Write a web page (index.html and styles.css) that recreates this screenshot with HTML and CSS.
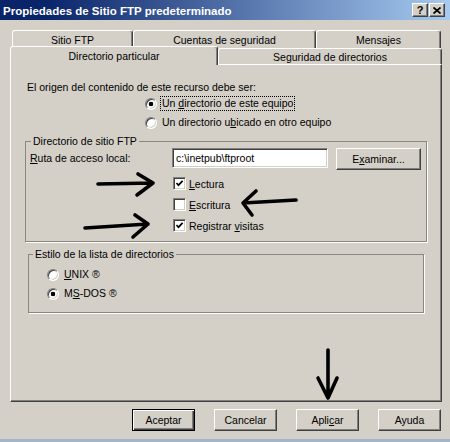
FILE: index.html
```
<!DOCTYPE html>
<html lang="es">
<head>
<meta charset="utf-8">
<title>Propiedades de Sitio FTP predeterminado</title>
<link rel="stylesheet" href="styles.css">
</head>
<body>
<div class="window">
  <div class="titlebar">
    <span class="title">Propiedades de Sitio FTP predeterminado</span>
    <div class="caption-btns">
      <span class="cbtn help">?</span>
      <span class="cbtn close"><svg width="8" height="7" viewBox="0 0 8 7"><path d="M0.5 0.5 L7.5 6.5 M7.5 0.5 L0.5 6.5" stroke="#000" stroke-width="1.7" fill="none"/></svg></span>
    </div>
  </div>

  <div class="tabs">
    <div class="tabrow row1">
      <div class="tab tab-ftp">Sitio FTP</div>
      <div class="tab tab-cuentas">Cuentas de seguridad</div>
      <div class="tab tab-msg">Mensajes</div>
    </div>
    <div class="tabrow row2">
      <div class="tab sel">Directorio particular</div>
      <div class="tab tab-seg">Seguridad de directorios</div>
    </div>
  </div>

  <div class="panel">
    <p class="intro">El origen del contenido de este recurso debe ser:</p>
    <div class="src-options">
      <div class="opt"><span class="radio on"></span><span class="lbl focus">Un <u>d</u>irectorio de este equipo</span></div>
      <div class="opt"><span class="radio"></span><span class="lbl">Un directorio u<u>b</u>icado en otro equipo</span></div>
    </div>

    <fieldset class="group g1">
      <legend>Directorio de sitio FTP</legend>
      <div class="path-row">
        <span class="path-label"><u>R</u>uta de acceso local:</span>
        <div class="textbox">c:\inetpub\ftproot</div>
        <div class="btn examinar">E<u>x</u>aminar...</div>
      </div>
      <div class="checks">
        <div class="chk-row"><span class="checkbox"><svg width="9" height="9" viewBox="0 0 9 9"><polyline points="1.5,4 3.5,6.2 7.6,1.8" fill="none" stroke="#000" stroke-width="1.7"/></svg></span><span class="lbl"><u>L</u>ectura</span></div>
        <div class="chk-row"><span class="checkbox"></span><span class="lbl"><u>E</u>scritura</span></div>
        <div class="chk-row"><span class="checkbox"><svg width="9" height="9" viewBox="0 0 9 9"><polyline points="1.5,4 3.5,6.2 7.6,1.8" fill="none" stroke="#000" stroke-width="1.7"/></svg></span><span class="lbl">Registrar <u>v</u>isitas</span></div>
      </div>
    </fieldset>

    <fieldset class="group g2">
      <legend>Estilo de la lista de directorios</legend>
      <div class="style-options">
        <div class="opt"><span class="radio"></span><span class="lbl"><u>U</u>NIX ®</span></div>
        <div class="opt"><span class="radio on"></span><span class="lbl">M<u>S</u>-DOS ®</span></div>
      </div>
    </fieldset>
  </div>

  <div class="buttons">
    <div class="btn default">Aceptar</div>
    <div class="btn">Cancelar</div>
    <div class="btn">Apli<u>c</u>ar</div>
    <div class="btn">Ayuda</div>
  </div>
  <div class="taskline"></div>
</div>

<svg class="arrows" width="450" height="442" viewBox="0 0 450 442">
  <g fill="none" stroke="#000" stroke-width="3.6" stroke-linecap="round" stroke-linejoin="round">
    <path d="M98 184 L153 183 M138 174 L153 183 L137 195"/>
    <path d="M296 200 L243 203 M256 191 L243 203 L252 215"/>
    <path d="M85 228 L148 224 M135 215 L148 224 L133 237"/>
    <path d="M328 350 L328 398 M318 378 L328 398 L337 378"/>
  </g>
</svg>
</body>
</html>
```

FILE: styles.css
```
* {
  box-sizing: border-box;
}

html, body {
  margin: 0;
  padding: 0;
}

body {
  width: 450px;
  height: 442px;
  overflow: hidden;
  position: relative;
  background: #d4d0c8;
  font-family: "Liberation Sans", Arial, sans-serif;
  font-size: 10.5px;
  color: #000;
}

.window {
  width: 450px;
  height: 442px;
}

/* Title bar */
.titlebar {
  height: 20px;
  background: linear-gradient(to right, #0a246a 0%, #0a246a 10%, #a6caf0 100%);
  display: flex;
  align-items: center;
  justify-content: space-between;
  padding: 0 5px 0 3px;
}

.title {
  color: #fff;
  font-weight: bold;
  font-size: 11.5px;
  line-height: 20px;
  padding-top: 2px;
}

.caption-btns {
  display: flex;
  gap: 1px;
}

.cbtn {
  width: 16px;
  height: 14px;
  background: #d4d0c8;
  border: 1px solid;
  border-color: #fff #404040 #404040 #fff;
  box-shadow: inset -1px -1px #808080;
  display: flex;
  align-items: center;
  justify-content: center;
  font-weight: bold;
  font-size: 11px;
  line-height: 1;
}

/* Tabs */
.tabs {
  margin-top: 10px;
}

.tabrow {
  display: flex;
}

.row1 {
  height: 18px;
  margin-left: 12px;
}

.row2 {
  height: 16px;
  margin-left: 10px;
  align-items: flex-start;
}

.tab {
  height: 100%;
  background: #d4d0c8;
  border-top: 1px solid #fff;
  border-left: 1px solid #fff;
  border-right: 1px solid #404040;
  box-shadow: inset -1px 0 #808080;
  border-radius: 3px 3px 0 0;
  display: flex;
  align-items: center;
  justify-content: center;
  white-space: nowrap;
}

.tab-ftp { width: 121px; }
.tab-cuentas { width: 183px; }
.tab-msg { width: 125px; }
.tab-seg { width: 224px; }

.row2 .sel {
  width: 208px;
  height: 19px;
  margin-top: -2px;
  position: relative;
  z-index: 1;
}

/* Panel */
.panel {
  margin-left: 10px;
  width: 432px;
  height: 338px;
  border: 1px solid;
  border-color: #fff #404040 #404040 #fff;
  box-shadow: inset -1px -1px #808080;
}

.intro {
  margin: 0 0 0 16px;
  padding-top: 16px;
  line-height: 13px;
}

.src-options {
  margin-left: 134px;
}

.opt {
  display: flex;
  align-items: center;
  height: 19px;
}

.opt .lbl {
  margin-left: 4px;
  padding: 0 1px;
  line-height: 13px;
}

.focus {
  outline: 1px dotted #000;
}

.radio {
  flex: none;
  width: 12px;
  height: 12px;
  border-radius: 50%;
  background: #fff;
  border: 1px solid;
  border-color: #808080 #fff #fff #808080;
  box-shadow: inset 1px 1px #404040, inset -1px -1px #d4d0c8;
}

.radio.on {
  background: radial-gradient(circle, #000 0 2px, #fff 2.6px);
}

/* Group boxes */
.group {
  margin: 0;
  padding: 0;
  border: 1px solid #8a877f;
  box-shadow: 1px 1px 0 #fff;
  min-inline-size: 0;
}

.group legend {
  padding: 0 2px;
  line-height: 13px;
}

.g1 {
  margin: 3px 0 0 14px;
  width: 402px;
  padding-bottom: 5px;
}

.g1 legend {
  margin-left: 5px;
}

.path-row {
  display: flex;
  align-items: flex-start;
  height: 22px;
  padding-left: 4px;
}

.path-label {
  width: 142px;
  line-height: 20px;
}

.textbox {
  width: 156px;
  height: 20px;
  background: #fff;
  border: 1px solid;
  border-color: #808080 #fff #fff #808080;
  box-shadow: inset 1px 1px #404040, inset -1px -1px #d4d0c8;
  padding-left: 3px;
  line-height: 18px;
  white-space: nowrap;
}

.checks {
  margin-top: 3px;
  padding-left: 147px;
}

.chk-row {
  display: flex;
  align-items: center;
  height: 21px;
}

.checkbox {
  flex: none;
  width: 13px;
  height: 13px;
  background: #fff;
  border: 1px solid;
  border-color: #808080 #fff #fff #808080;
  box-shadow: inset 1px 1px #404040, inset -1px -1px #d4d0c8;
  display: flex;
  align-items: center;
  justify-content: center;
}

.chk-row .lbl {
  margin-left: 3px;
}

.g2 {
  margin: 6px 0 0 17px;
  width: 396px;
  padding-top: 4px;
  padding-bottom: 9px;
}

.g2 legend {
  margin-left: 4px;
}

.style-options {
  margin-left: 18px;
}

/* Buttons */
.btn {
  width: 63px;
  height: 22px;
  background: #d4d0c8;
  border: 1px solid;
  border-color: #fff #404040 #404040 #fff;
  box-shadow: inset -1px -1px #808080;
  display: flex;
  align-items: center;
  justify-content: center;
  white-space: nowrap;
}

.btn.default {
  border: 1px solid #000;
  box-shadow: inset 1px 1px #fff, inset -1px -1px #404040, inset -2px -2px #808080;
}

.examinar {
  width: 85px;
  margin-left: 8px;
}

.buttons {
  display: flex;
  gap: 19px;
  padding-left: 132px;
  margin-top: 7px;
}

.taskline {
  height: 3px;
  margin-top: 8px;
  background: #a4b4ca;
}

/* Annotation arrows drawn over the dialog */
.arrows {
  position: absolute;
  top: 0;
  left: 0;
  pointer-events: none;
}
```
